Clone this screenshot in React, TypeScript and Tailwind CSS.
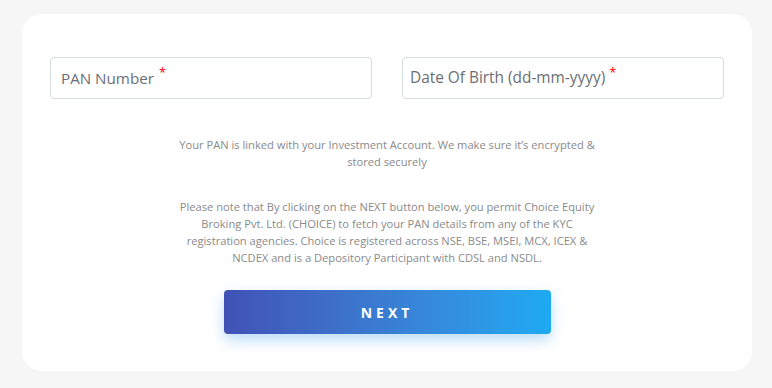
export default function App() {
  return (
    <div className="min-h-[388px] w-[772px] bg-[#f6f6f6] pt-[14px] pl-[22px]" style={{ fontFamily: '"Open Sans", sans-serif' }}>
      <div className="w-[730px] h-[357px] bg-white rounded-[20px] px-[28px] pt-[43px] flex flex-col items-center">
        <div className="w-full grid grid-cols-2 gap-[30px]">
          <div className="h-[42px] border border-[#d6dbdd] rounded-[4px] flex items-center pl-[10px] pr-[10px]">
            <span className="text-[15.2px] text-[#6b6f75]">PAN Number</span>
            <span className="text-[13px] text-[#ff0000] ml-[5px] -mt-[12px] leading-none">*</span>
          </div>
          <div className="h-[42px] border border-[#d6dbdd] rounded-[4px] flex items-center pl-[7px] pr-[10px]">
            <span className="text-[15.4px] text-[#6b6f75]">Date Of Birth (dd-mm-yyyy)</span>
            <span className="text-[13px] text-[#ff0000] ml-[4px] -mt-[12px] leading-none">*</span>
          </div>
        </div>
        <p className="mt-[37px] w-[426px] text-center text-[11.15px] leading-[17px] text-[#8a8a8a]">
          Your PAN is linked with your Investment Account. We make sure it’s encrypted &amp; stored securely
        </p>
        <p className="mt-[28px] w-[426px] text-center text-[11.15px] leading-[17px] text-[#8a8a8a]">
          Please note that By clicking on the NEXT button below, you permit Choice Equity Broking Pvt. Ltd. (CHOICE) to fetch your PAN details from any of the KYC registration agencies. Choice is registered across NSE, BSE, MSEI, MCX, ICEX &amp; NCDEX and is a Depository Participant with CDSL and NSDL.
        </p>
        <button className="mt-[24px] w-[327px] h-[44px] rounded-[4px] bg-gradient-to-r from-[#4052b5] to-[#1caaf2] text-white font-bold text-[14px] tracking-[4px] shadow-[0_6px_14px_rgba(30,140,230,0.3)]">
          NEXT
        </button>
      </div>
    </div>
  );
}
